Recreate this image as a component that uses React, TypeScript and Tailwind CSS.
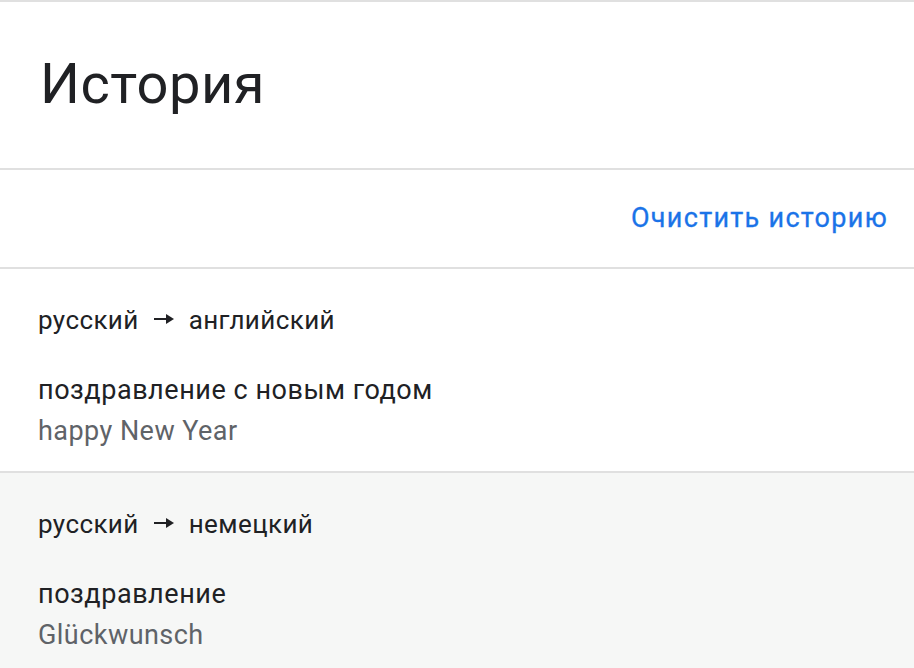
import React from 'react';

interface HistoryItem {
  from: string;
  to: string;
  source: string;
  translation: string;
}

const items: HistoryItem[] = [
  { from: 'русский', to: 'английский', source: 'поздравление с новым годом', translation: 'happy New Year' },
  { from: 'русский', to: 'немецкий', source: 'поздравление', translation: 'Glückwunsch' },
];

const Arrow = () => (
  <svg width="20" height="12" viewBox="0 0 20 12" className="mx-[15px] mt-[-3px]" fill="#202124">
    <rect x="0" y="5" width="13" height="2" />
    <path d="M12 1 L20 6 L12 11 Z" />
  </svg>
);

const HistoryRow: React.FC<{ item: HistoryItem; shaded?: boolean }> = ({ item, shaded }) => (
  <div className={`border-b-2 border-[#e0e0e0] pl-[38px] pr-6 pt-[31px] pb-[19px] ${shaded ? 'bg-[#f6f7f6]' : 'bg-white'}`}>
    <div className="flex items-center text-[26px] leading-[41px] text-[#202124] tracking-[0.4px]">
      <span>{item.from}</span>
      <Arrow />
      <span>{item.to}</span>
    </div>
    <div className="mt-[29px] text-[27px] leading-[41px] text-[#202124] tracking-[0.55px]">{item.source}</div>
    <div className="text-[27px] leading-[41px] text-[#5f6368] tracking-[0.45px]">{item.translation}</div>
  </div>
);

export default function App() {
  return (
    <div className="min-h-[668px] w-[914px] bg-white font-['Roboto',sans-serif] border-t-2 border-[#e0e0e0]">
      <div className="h-[168px] flex items-center pl-[40px] pb-[2px] border-b-2 border-[#e0e0e0]">
        <h1 className="text-[56px] text-[#202124] tracking-[0.5px]">История</h1>
      </div>
      <div className="h-[99px] flex items-center justify-end pr-[26px] border-b-2 border-[#e0e0e0]">
        <button className="text-[27px] font-normal text-[#1a73e8] tracking-[1.3px] [-webkit-text-stroke:0.3px_#1a73e8]">Очистить историю</button>
      </div>
      {items.map((item, i) => (
        <HistoryRow key={i} item={item} shaded={i === 1} />
      ))}
    </div>
  );
}
